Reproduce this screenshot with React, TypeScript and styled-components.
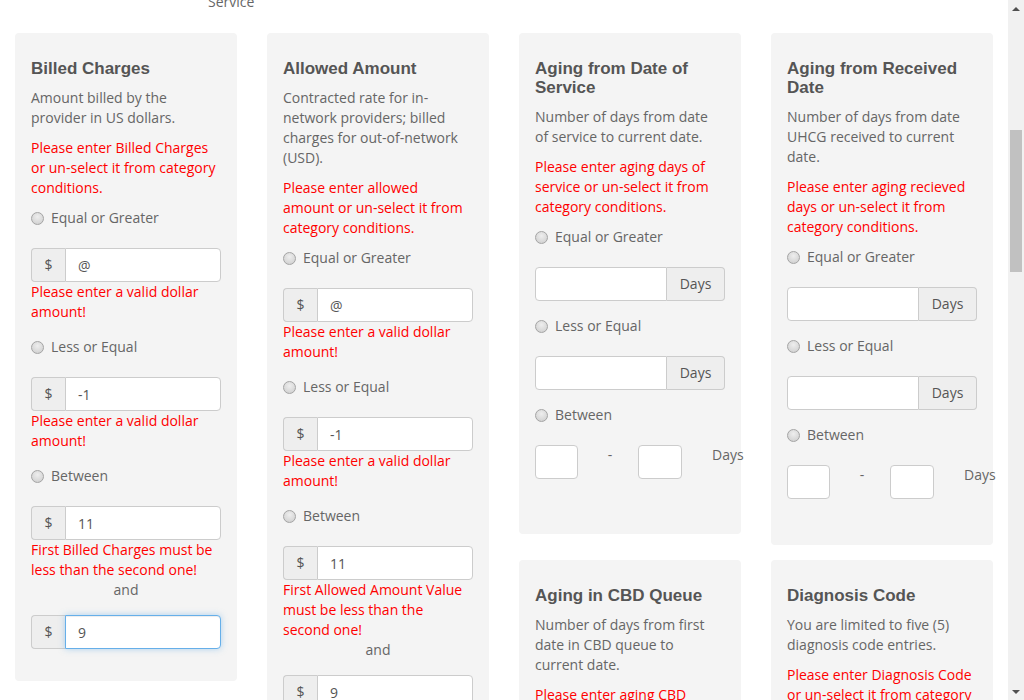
import React, { useEffect, useRef } from "react";
import styled, { createGlobalStyle, css } from "styled-components";

const GlobalStyle = createGlobalStyle`
  html, body {
    margin: 0;
    padding: 0;
    overflow: hidden;
    background: #fff;
  }
  body {
    font-family: "Open Sans", "Liberation Sans", sans-serif;
    font-size: 14px;
    line-height: 20px;
    color: #666;
  }
  * { box-sizing: border-box; }
`;

const Page = styled.div`
  display: flex;
  width: 1024px;
  height: 700px;
  background: #fff;
`;

const Main = styled.div`
  flex: 1;
  height: 700px;
  overflow: hidden;
`;

const TopStrip = styled.div`
  display: flex;
  align-items: flex-start;
  height: 33px;
  padding-left: 208px;
`;

const TopLabel = styled.span`
  display: block;
  margin-top: -8px;
  line-height: 20px;
  font-size: 14px;
  color: #666;
`;

const Grid = styled.div`
  display: grid;
  grid-template-columns: 222px 222px 474px;
  column-gap: 30px;
  padding: 0 15px;
  align-items: start;
`;

const SubGrid = styled.div`
  display: grid;
  grid-template-columns: 222px 222px;
  column-gap: 30px;
  row-gap: 15px;
  align-items: start;
`;

const Card = styled.section`
  background: #f4f4f4;
  border-radius: 4px;
  padding: 26px 16px 17px;
`;

const Title = styled.h4`
  margin: 0 0 10px;
  font-family: "Liberation Sans", Arial, sans-serif;
  font-weight: bold;
  font-size: 17px;
  line-height: 19px;
  color: #555;
`;

const Desc = styled.p`
  margin: 0 0 10px;
  padding-right: 4px;
  font-size: 14px;
  line-height: 20px;
  color: #666;
`;

const ErrorText = styled.p<{ $field?: boolean }>`
  margin: ${(p) => (p.$field ? "0" : "0 0 10px")};
  padding-right: 4px;
  font-size: 14px;
  line-height: 20px;
  color: #ff0000;
`;

const FormGroup = styled.div`
  margin-bottom: 15px;
`;

const RadioRow = styled.label`
  display: flex;
  align-items: center;
  line-height: 20px;
  margin-bottom: 20px;
  color: #666;
`;

const RadioDot = styled.span`
  width: 13px;
  height: 13px;
  border-radius: 50%;
  border: 1px solid #a4a4a4;
  background: radial-gradient(circle at 50% 35%, #eeeeee 0%, #d6d6d6 70%, #c8c8c8 100%);
  margin-right: 7px;
  flex: none;
`;

const InputGroup = styled.div`
  display: flex;
  height: 34px;
`;

const Addon = styled.span<{ $side: "left" | "right" }>`
  flex: none;
  width: ${(p) => (p.$side === "left" ? "34px" : "58px")};
  height: 34px;
  background: #eee;
  border: 1px solid #ccc;
  color: #555;
  text-align: center;
  line-height: 32px;
  font-size: 14px;
  ${(p) =>
    p.$side === "left"
      ? css`
          border-radius: 4px 0 0 4px;
          border-right: 0;
        `
      : css`
          border-radius: 0 4px 4px 0;
          border-left: 0;
        `}
`;

const TextField = styled.input<{ $round: "left" | "right"; $focus?: boolean }>`
  flex: 1;
  min-width: 0;
  height: 34px;
  padding: 6px 12px;
  border: 1px solid #ccc;
  background: #fff;
  font-family: "Open Sans", "Liberation Sans", sans-serif;
  font-size: 14px;
  color: #555;
  outline: none;
  border-radius: ${(p) => (p.$round === "right" ? "0 4px 4px 0" : "4px 0 0 4px")};
  ${(p) =>
    p.$focus &&
    css`
      border-color: #66afe9;
      box-shadow: inset 0 1px 1px rgba(0, 0, 0, 0.075), 0 0 6px rgba(102, 175, 233, 0.5);
    `}
`;

const AndLabel = styled.div`
  text-align: center;
  line-height: 20px;
  color: #666;
  margin-bottom: 15px;
`;

const BetweenRow = styled.div<{ $tail: number }>`
  display: flex;
  align-items: flex-start;
  margin-bottom: ${(p) => p.$tail}px;
`;

const SmallBox = styled.input<{ $w: number }>`
  flex: none;
  width: ${(p) => p.$w}px;
  height: 34px;
  border: 1px solid #ccc;
  border-radius: 4px;
  background: #fff;
  outline: none;
`;

const Dash = styled.span`
  flex: none;
  width: 60px;
  padding-left: 4px;
  text-align: center;
  line-height: 20px;
  color: #666;
`;

const DaysLabel = styled.span`
  flex: none;
  margin-left: 30px;
  line-height: 20px;
  color: #666;
  white-space: nowrap;
`;

const ScrollBar = styled.div`
  flex: none;
  width: 16px;
  height: 700px;
  background: #f1f1f1;
  display: flex;
  flex-direction: column;
`;

const ArrowButton = styled.div<{ $down?: boolean }>`
  height: 17px;
  display: flex;
  align-items: center;
  justify-content: center;
  &::before {
    content: "";
    width: 0;
    height: 0;
    border-left: 4px solid transparent;
    border-right: 4px solid transparent;
    ${(p) =>
      p.$down
        ? css`
            border-top: 4px solid #505050;
          `
        : css`
            border-bottom: 4px solid #505050;
          `}
  }
`;

const Track = styled.div`
  flex: 1;
`;

const Thumb = styled.div`
  margin: 113px 2px 0;
  height: 142px;
  background: #c1c1c1;
`;

function Radio({ label }: { label: string }) {
  return (
    <RadioRow>
      <RadioDot />
      {label}
    </RadioRow>
  );
}

function Dollar({ value, focus }: { value: string; focus?: boolean }) {
  const ref = useRef<HTMLInputElement>(null);
  useEffect(() => {
    if (focus && ref.current) {
      ref.current.focus();
      const n = ref.current.value.length;
      ref.current.setSelectionRange(n, n);
    }
  }, [focus]);
  return (
    <InputGroup>
      <Addon $side="left">$</Addon>
      <TextField ref={ref} $round="right" $focus={focus} defaultValue={value} />
    </InputGroup>
  );
}

function DaysInput() {
  return (
    <InputGroup>
      <TextField $round="left" defaultValue="" />
      <Addon $side="right">Days</Addon>
    </InputGroup>
  );
}

function DollarCard({
  title,
  desc,
  required,
  rangeError,
}: {
  title: string;
  desc: string;
  required: string;
  rangeError: string;
}) {
  return (
    <Card>
      <Title>{title}</Title>
      <Desc>{desc}</Desc>
      <ErrorText>{required}</ErrorText>
      <Radio label="Equal or Greater" />
      <FormGroup>
        <Dollar value="@" />
        <ErrorText $field>Please enter a valid dollar amount!</ErrorText>
      </FormGroup>
      <Radio label="Less or Equal" />
      <FormGroup>
        <Dollar value="-1" />
        <ErrorText $field>Please enter a valid dollar amount!</ErrorText>
      </FormGroup>
      <Radio label="Between" />
      <FormGroup>
        <Dollar value="11" />
        <ErrorText $field>{rangeError}</ErrorText>
        <AndLabel>and</AndLabel>
        <Dollar value="9" focus={title === "Billed Charges"} />
      </FormGroup>
    </Card>
  );
}

function AgingCard({
  title,
  desc,
  required,
  tail,
}: {
  title: string;
  desc: string;
  required: string;
  tail: number;
}) {
  return (
    <Card>
      <Title>{title}</Title>
      <Desc>{desc}</Desc>
      <ErrorText>{required}</ErrorText>
      <Radio label="Equal or Greater" />
      <FormGroup>
        <DaysInput />
      </FormGroup>
      <Radio label="Less or Equal" />
      <FormGroup>
        <DaysInput />
      </FormGroup>
      <Radio label="Between" />
      <BetweenRow $tail={tail}>
        <SmallBox $w={43} />
        <Dash>-</Dash>
        <SmallBox $w={44} />
        <DaysLabel>Days</DaysLabel>
      </BetweenRow>
    </Card>
  );
}

export default function App() {
  return (
    <>
      <GlobalStyle />
      <Page>
        <Main>
          <TopStrip>
            <TopLabel>Service</TopLabel>
          </TopStrip>
          <Grid>
            <DollarCard
              title="Billed Charges"
              desc="Amount billed by the provider in US dollars."
              required="Please enter Billed Charges or un-select it from category conditions."
              rangeError="First Billed Charges must be less than the second one!"
            />
            <DollarCard
              title="Allowed Amount"
              desc="Contracted rate for in-network providers; billed charges for out-of-network (USD)."
              required="Please enter allowed amount or un-select it from category conditions."
              rangeError="First Allowed Amount Value must be less than the second one!"
            />
            <SubGrid>
              <AgingCard
                title="Aging from Date of Service"
                desc="Number of days from date of service to current date."
                required="Please enter aging days of service or un-select it from category conditions."
                tail={38}
              />
              <AgingCard
                title="Aging from Received Date"
                desc="Number of days from date UHCG received to current date."
                required="Please enter aging recieved days or un-select it from category conditions."
                tail={29}
              />
              <Card>
                <Title>Aging in CBD Queue</Title>
                <Desc>Number of days from first date in CBD queue to current date.</Desc>
                <ErrorText>Please enter aging CBD queue days or un-select it from category conditions.</ErrorText>
                <Radio label="Equal or Greater" />
                <FormGroup>
                  <DaysInput />
                </FormGroup>
              </Card>
              <Card>
                <Title>Diagnosis Code</Title>
                <Desc>You are limited to five (5) diagnosis code entries.</Desc>
                <ErrorText>Please enter Diagnosis Code or un-select it from category conditions.</ErrorText>
              </Card>
            </SubGrid>
          </Grid>
        </Main>
        <ScrollBar>
          <ArrowButton />
          <Track>
            <Thumb />
          </Track>
          <ArrowButton $down />
        </ScrollBar>
      </Page>
    </>
  );
}
